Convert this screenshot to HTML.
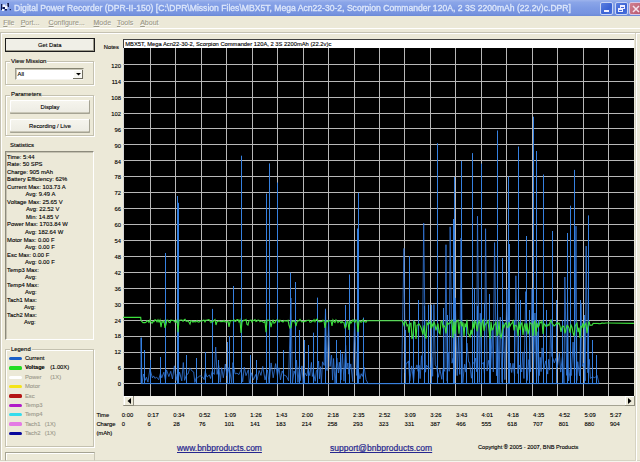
<!DOCTYPE html><html><head><meta charset="utf-8"><style>
*{margin:0;padding:0;box-sizing:border-box}
html,body{width:640px;height:462px;overflow:hidden;background:#ece9d8;font-family:'Liberation Sans', sans-serif;color:#000}
.ab{position:absolute}
.t{position:absolute;white-space:nowrap;font-size:5.85px;line-height:7px;-webkit-text-stroke:0.12px currentColor}
.grp{position:absolute;border:1px solid #c4c1b0;box-shadow:inset 1px 1px 0 #fff, 1px 1px 0 #fff}
.lbl{position:absolute;background:#ece9d8;white-space:nowrap;font-size:5.9px;line-height:7px;padding:0 1px;-webkit-text-stroke:0.12px currentColor}
.btn{position:absolute;background:linear-gradient(#f6f5ee,#ecebe2);border-radius:1px;box-shadow:inset -1px -1px 0 #a5a393, inset 0 -2px 0 #c9c7b8, inset 1px 1px 0 #fff;font-size:5.8px;line-height:7px;text-align:center;white-space:nowrap;-webkit-text-stroke:0.12px currentColor}
</style></head><body>

<div class="ab" style="left:0;top:0;width:640px;height:16px;background:linear-gradient(#9db3ec 0%,#8aa5e8 15%,#7d9ae4 50%,#7693e0 85%,#6b89d6 100%)"></div>
<svg class="ab" style="left:0;top:0" width="14" height="16" viewBox="0 0 14 16"><g fill="#101a50"><rect x="1" y="4" width="1.5" height="6"/><rect x="7" y="3" width="2" height="4"/><rect x="3" y="7" width="2" height="2"/><rect x="9.7" y="9" width="1.2" height="1.2"/><rect x="5" y="9" width="2" height="1.5"/></g><g fill="#f0f4ff"><rect x="2.5" y="4.5" width="3" height="2.5"/><rect x="5" y="6" width="2.5" height="3"/><rect x="2" y="9" width="2" height="2"/><rect x="6.5" y="3.5" width="0.8" height="3"/></g></svg>
<div class="ab" style="left:14px;top:3px;font-size:9.2px;line-height:10px;color:#dce6fa;-webkit-text-stroke:0.35px #dce6fa;white-space:nowrap;transform-origin:0 0;transform:scaleX(0.9354)">Digital Power Recorder (DPR-II-150) [C:\DPR\Mission Files\MBX5T, Mega Acn22-30-2, Scorpion Commander 120A, 2 3S 2200mAh (22.2v)c.DPR]</div>
<div class="ab" style="left:600px;top:2px;width:13px;height:13px;border:1px solid #c8d4f4;border-radius:2px;background:linear-gradient(135deg,#5b7fe0,#3a62d4 60%,#4a70dc)"><div class="ab" style="left:2.5px;top:7px;width:5px;height:2px;background:#eef"></div></div>
<div class="ab" style="left:614.5px;top:2px;width:13px;height:13px;border:1px solid #c8d4f4;border-radius:2px;background:linear-gradient(135deg,#5b7fe0,#3a62d4 60%,#4a70dc)"><div class="ab" style="left:4.5px;top:2px;width:5px;height:4px;border:1px solid #eef;border-top-width:2px"></div><div class="ab" style="left:2.5px;top:4.5px;width:5px;height:4px;border:1px solid #eef;border-top-width:2px;background:#4468d6"></div></div>
<div class="ab" style="left:629px;top:2px;width:13px;height:13px;border:1px solid #d8c8e8;border-radius:2px;background:linear-gradient(135deg,#d08090,#b85870)"><svg class="ab" style="left:2px;top:2px" width="8" height="8"><path d="M1 1L7 7M7 1L1 7" stroke="#f4e0ec" stroke-width="1.5"/></svg></div>
<div class="ab" style="left:0;top:16px;width:640px;height:12px;background:#ece9d8"></div>
<div class="ab" style="left:0;top:28px;width:640px;height:1px;background:#fff"></div>
<div class="ab" style="left:0;top:32px;width:640px;height:1px;background:#c5c2b2"></div>
<div class="ab" style="left:0;top:33px;width:640px;height:1px;background:#fff"></div>
<div class="t" style="left:3.2px;top:19px;font-size:7px;line-height:8px;color:#9d9a89;text-shadow:0.6px 0.6px 0 #fff"><u>F</u>ile</div>
<div class="t" style="left:20.7px;top:19px;font-size:7px;line-height:8px;color:#9d9a89;text-shadow:0.6px 0.6px 0 #fff"><u>P</u>ort...</div>
<div class="t" style="left:48.6px;top:19px;font-size:7px;line-height:8px;color:#9d9a89;text-shadow:0.6px 0.6px 0 #fff"><u>C</u>onfigure...</div>
<div class="t" style="left:93.5px;top:19px;font-size:7px;line-height:8px;color:#9d9a89;text-shadow:0.6px 0.6px 0 #fff"><u>M</u>ode</div>
<div class="t" style="left:116.9px;top:19px;font-size:7px;line-height:8px;color:#9d9a89;text-shadow:0.6px 0.6px 0 #fff"><u>T</u>ools</div>
<div class="t" style="left:140.2px;top:19px;font-size:7px;line-height:8px;color:#9d9a89;text-shadow:0.6px 0.6px 0 #fff"><u>A</u>bout</div>
<div class="ab" style="left:0;top:32px;width:1px;height:430px;background:#c5c2b2"></div>
<div class="ab" style="left:1px;top:33px;width:1px;height:428px;background:#fff"></div>
<div class="ab" style="left:0;top:460px;width:640px;height:1px;background:#d6d3c3"></div>
<div class="ab" style="left:0;top:461px;width:640px;height:1px;background:#f6f5ee"></div>
<div class="ab" style="left:635px;top:33px;width:1px;height:428px;background:#d6d3c3"></div>
<div class="ab" style="left:636px;top:33px;width:1px;height:428px;background:#fff"></div>
<div class="ab" style="left:5px;top:38px;width:90px;height:14px;border:1px solid #1c1c1c;background:#f0efe7;box-shadow:inset -1px -1px 0 #9d9b8c"></div>
<div class="t" style="left:38px;top:41.9px">Get Data</div>
<div class="grp" style="left:5px;top:61px;width:89px;height:24px"></div>
<div class="lbl" style="left:10px;top:57px;font-size:6.1px">View Mission</div>
<div class="ab" style="left:15px;top:68px;width:69px;height:12px;background:#fff;border:1px solid;border-color:#858371 #e8e6da #f4f3ee #a09e90;box-shadow:inset 1px 1px 0 #c9c7b8"></div>
<div class="t" style="left:17.5px;top:70.9px">All</div>
<div class="ab" style="left:73px;top:70px;width:10px;height:9px;background:#f8f8f4;box-shadow:inset -1px -1px 0 #6f6d60, inset 1px 1px 0 #fff"><svg class="ab" style="left:2.5px;top:3px" width="5" height="3"><path d="M0 0H5L2.5 2.6Z" fill="#000"/></svg></div>
<div class="grp" style="left:5px;top:94.5px;width:89px;height:41px"></div>
<div class="lbl" style="left:10px;top:90.8px">Parameters</div>
<div class="btn" style="left:10px;top:100px;width:80px;height:14px;padding-top:3.5px">Display</div>
<div class="btn" style="left:10px;top:119px;width:80px;height:14px;padding-top:3.5px">Recording / Live</div>
<div class="t" style="left:10px;top:142px;font-size:6px">Statistics</div>
<div class="ab" style="left:5px;top:151px;width:89px;height:189px;border:1px solid;border-color:#8c8a7c #fff #fff #8c8a7c;box-shadow:inset 1px 1px 0 #c5c2b2"></div>
<div class="t" style="left:7.1px;top:153.80px">Time: 5:44</div>
<div class="t" style="left:7.1px;top:161.32px">Rate: 50 SPS</div>
<div class="t" style="left:7.1px;top:168.84px">Charge: 905 mAh</div>
<div class="t" style="left:7.1px;top:176.36px">Battery Efficiency: 62%</div>
<div class="t" style="left:7.1px;top:183.88px">Current Max: 103.73 A</div>
<div class="t" style="left:25.5px;top:191.40px">Avg: 9.49 A</div>
<div class="t" style="left:7.1px;top:198.92px">Voltage Max: 25.65 V</div>
<div class="t" style="left:26px;top:206.44px">Avg: 22.52 V</div>
<div class="t" style="left:26px;top:213.96px">Min: 14.85 V</div>
<div class="t" style="left:7.1px;top:221.48px">Power Max: 1703.84 W</div>
<div class="t" style="left:25px;top:229.00px">Avg: 182.64 W</div>
<div class="t" style="left:7.1px;top:236.52px">Motor Max: 0.00 F</div>
<div class="t" style="left:25px;top:244.04px">Avg: 0.00 F</div>
<div class="t" style="left:7.1px;top:251.56px">Esc Max: 0.00 F</div>
<div class="t" style="left:25px;top:259.08px">Avg: 0.00 F</div>
<div class="t" style="left:7.1px;top:266.60px">Temp3 Max:</div>
<div class="t" style="left:25px;top:274.12px">Avg:</div>
<div class="t" style="left:7.1px;top:281.64px">Temp4 Max:</div>
<div class="t" style="left:25px;top:289.16px">Avg:</div>
<div class="t" style="left:7.1px;top:296.68px">Tach1 Max:</div>
<div class="t" style="left:24px;top:304.20px">Avg:</div>
<div class="t" style="left:7.1px;top:311.72px">Tach2 Max:</div>
<div class="t" style="left:24px;top:319.24px">Avg:</div>
<div class="grp" style="left:5px;top:349px;width:89px;height:98px"></div>
<div class="lbl" style="left:10px;top:345.5px">Legend</div>
<div class="ab" style="left:9px;top:357.00px;width:13px;height:3.2px;background:#1a5fc8;border-radius:1.5px"></div>
<div class="t" style="left:24.9px;top:355.10px;color:#000;font-weight:normal;font-size:5.85px">Current</div>
<div class="ab" style="left:9px;top:366.35px;width:13px;height:3.2px;background:#22dd22;border-radius:1.5px"></div>
<div class="t" style="left:24.9px;top:364.45px;color:#000;font-weight:bold;font-size:5.6px">Voltage</div>
<div class="t" style="left:50.2px;top:364.45px;color:#000;font-size:5.76px">(1.00X)</div>
<div class="ab" style="left:9px;top:375.70px;width:13px;height:3.2px;background:#ffffff;border-radius:1.5px"></div>
<div class="t" style="left:24.9px;top:373.80px;color:#9c9a8c;font-weight:normal;font-size:5.85px">Power</div>
<div class="t" style="left:50.2px;top:373.80px;color:#9c9a8c;font-size:5.76px">(1X)</div>
<div class="ab" style="left:9px;top:385.05px;width:13px;height:3.2px;background:#f4e418;border-radius:1.5px"></div>
<div class="t" style="left:24.9px;top:383.15px;color:#9c9a8c;font-weight:normal;font-size:5.85px">Motor</div>
<div class="ab" style="left:9px;top:394.40px;width:13px;height:3.2px;background:#b41414;border-radius:1.5px"></div>
<div class="t" style="left:24.9px;top:392.50px;color:#9c9a8c;font-weight:normal;font-size:5.85px">Esc</div>
<div class="ab" style="left:9px;top:403.75px;width:13px;height:3.2px;background:#b01cc8;border-radius:1.5px"></div>
<div class="t" style="left:24.9px;top:401.85px;color:#9c9a8c;font-weight:normal;font-size:5.85px">Temp3</div>
<div class="ab" style="left:9px;top:413.10px;width:13px;height:3.2px;background:#34dcec;border-radius:1.5px"></div>
<div class="t" style="left:24.9px;top:411.20px;color:#9c9a8c;font-weight:normal;font-size:5.85px">Temp4</div>
<div class="ab" style="left:9px;top:422.45px;width:13px;height:3.2px;background:#e47ae4;border-radius:1.5px"></div>
<div class="t" style="left:24.9px;top:420.55px;color:#9c9a8c;font-weight:normal;font-size:5.85px">Tach1</div>
<div class="t" style="left:44.8px;top:420.55px;color:#9c9a8c;font-size:5.76px">(1X)</div>
<div class="ab" style="left:9px;top:431.80px;width:13px;height:3.2px;background:#08089c;border-radius:1.5px"></div>
<div class="t" style="left:24.9px;top:429.90px;color:#9c9a8c;font-weight:normal;font-size:5.85px">Tach2</div>
<div class="t" style="left:44.8px;top:429.90px;color:#9c9a8c;font-size:5.76px">(1X)</div>
<div class="ab" style="left:5px;top:452px;width:90px;height:9px;border:1px solid;border-color:#a5a393 #c8c6b6 transparent #a5a393;box-shadow:inset 1px 1px 0 #fff"></div>
<div class="t" style="left:103.8px;top:43.5px;font-size:5.75px">Notes</div>
<div class="ab" style="left:123px;top:39px;width:511px;height:9px;background:#fff;border-top:1px solid #404040;border-left:1px solid #404040"></div>
<div class="t" style="left:125.3px;top:40.5px;font-size:5.79px">MBX5T, Mega Acn22-30-2, Scorpion Commander 120A, 2 3S 2200mAh (22.2v)c</div>
<svg class="ab" style="left:123px;top:48px" width="511" height="348" viewBox="123 48 511 348"><rect x="123" y="48" width="511" height="348" fill="#000"/><line x1="123.5" y1="48" x2="123.5" y2="396" stroke="#d8d8d8" stroke-width="1"/><path d="M123 64.5H634 M123 81.5H634 M123 97.5H634 M123 113.5H634 M123 128.5H634 M123 144.5H634 M123 160.5H634 M123 176.5H634 M123 192.5H634 M123 208.5H634 M123 224.5H634 M123 240.5H634 M123 256.5H634 M123 272.5H634 M123 288.5H634 M123 303.5H634 M123 320.5H634 M123 336.5H634 M123 352.5H634 M123 368.5H634 M123 383.5H634 M150.5 48V396 M175.5 48V396 M201.5 48V396 M226.5 48V396 M252.5 48V396 M277.5 48V396 M303.5 48V396 M328.5 48V396 M354.5 48V396 M379.5 48V396 M404.5 48V396 M430.5 48V396 M455.5 48V396 M481.5 48V396 M506.5 48V396 M532.5 48V396 M557.5 48V396 M583.5 48V396 M608.5 48V396" stroke="#b8b8b8" stroke-width="1" fill="none"/><path d="M141.00 383.6 L141.00 337.7 L142.00 383.6 L143.49 374.0 L145.29 380.3 L146.35 377.2 L147.98 382.1 L149.92 368.7 L152.39 377.9 L153.60 375.9 L154.88 378.3 L156.70 377.2 L158.72 379.7 L160.40 373.2 L161.76 377.8 L163.86 372.2 L165.49 380.4 L166.54 369.9 L168.86 376.6 L170.73 371.3 L172.44 379.0 L174.41 365.8 L175.99 380.6 L177.24 374.0 L178.43 377.8 L179.55 372.1 L181.78 380.9 L183.32 362.5 L184.59 380.4 L186.47 374.7 L188.02 374.0 L189.80 367.9 L192.15 371.1 L193.73 372.0 L194.83 382.5 L196.34 377.3 L197.49 377.8 L199.41 376.2 L200.96 375.9 L202.66 377.1 L204.17 379.6 L205.21 371.4 L207.02 377.1 L209.31 374.9 L210.57 378.5 L212.06 371.5 L214.34 374.4 L215.68 347.1 L217.10 374.4 L218.77 365.6 L220.32 382.3 L221.62 367.7 L223.34 377.8 L225.33 364.0 L227.05 375.8 L229.25 367.1 L231.67 382.8 L232.90 362.6 L235.14 373.9 L236.96 373.2 L238.93 374.6 L241.24 369.3 L242.68 381.9 L244.31 367.2 L246.00 375.6 L248.37 369.7 L249.40 383.6 L251.60 372.8 L253.44 379.9 L255.61 374.5 L257.03 379.9 L259.17 370.5 L260.93 375.4 L262.73 366.3 L265.04 379.9 L267.46 370.0 L269.12 383.1 L271.12 362.9 L273.20 377.8 L275.65 363.6 L277.38 375.6 L279.03 367.8 L280.50 379.9 L282.17 370.9 L283.93 375.0 L286.39 376.1 L288.56 380.8 L290.93 298.0 L292.41 383.0 L294.04 370.9 L295.60 375.4 L296.48 360.1 L297.94 382.4 L299.37 366.3 L300.24 380.7 L301.95 365.9 L303.16 383.5 L304.84 372.9 L306.76 376.0 L308.16 368.5 L309.78 375.6 L311.43 362.4 L312.30 376.5 L313.40 372.3 L315.25 381.3 L316.40 370.5 L317.52 369.7 L318.61 361.0 L319.41 378.8 L320.45 366.7 L321.36 383.4 L322.52 361.8 L324.22 365.4 L325.49 308.8 L327.06 370.6 L328.62 319.8 L330.02 366.5 L331.52 355.1 L332.60 380.1 L333.52 358.5 L335.08 383.6 L336.83 358.0 L338.42 373.0 L339.31 362.2 L341.00 379.9 L342.38 353.8 L343.95 381.2 L345.64 345.3 L346.76 368.7 L347.91 363.0 L348.85 374.2 L350.78 363.9 L352.74 381.6 L354.67 319.8 L356.62 375.4 L358.48 371.1 L359.86 378.9 L361.21 373.7 L362.38 376.4 L364.19 367.4 L366.07 379.8 L368.07 383.6 L369.96 383.6 L371.50 383.6 L373.14 383.6 L374.55 383.6 L375.62 383.6 L376.78 383.6 L379.03 383.6 L380.46 383.6 L382.86 383.6 L384.23 383.6 L385.63 383.6 L387.40 383.6 L388.68 383.6 L390.24 383.6 L392.68 383.6 L395.00 383.6 L397.22 383.6 L399.17 383.6 L401.54 383.6 L403.95 248.4 L405.29 372.8 L406.15 363.2 L407.36 363.0 L408.47 360.9 L409.75 381.0 L411.64 365.9 L413.63 381.2 L414.54 369.7 L415.65 368.9 L416.95 364.9 L418.15 371.4 L419.10 365.4 L420.16 378.6 L421.50 355.7 L422.32 369.8 L423.69 223.1 L425.48 372.2 L426.41 365.2 L428.34 367.6 L429.69 368.1 L430.77 369.2 L431.72 357.5 L432.66 376.3 L433.92 304.4 L435.28 364.8 L436.65 367.3 L438.29 377.3 L439.90 369.3 L441.81 379.3 L443.12 368.0 L444.80 371.4 L445.98 244.7 L447.13 381.2 L448.20 352.1 L449.18 371.3 L450.15 226.8 L452.01 363.2 L453.20 358.1 L454.04 378.9 L455.24 297.9 L457.18 375.6 L458.41 337.2 L459.78 374.4 L461.02 238.1 L462.74 382.8 L464.64 364.2 L465.85 372.1 L466.96 343.1 L468.67 362.2 L469.50 362.2 L471.44 378.2 L472.84 362.8 L474.52 363.0 L475.71 358.1 L476.61 371.7 L477.49 216.2 L479.35 382.5 L480.26 313.2 L481.56 364.4 L483.38 362.3 L484.53 374.3 L485.57 228.7 L487.07 371.1 L488.47 360.4 L490.46 373.3 L492.27 328.1 L493.30 371.9 L494.55 242.5 L496.48 375.8 L497.54 310.5 L499.06 383.5 L500.25 317.2 L502.01 382.3 L503.28 322.3 L504.92 379.7 L506.86 289.5 L508.70 381.1 L510.37 363.1 L511.68 372.5 L513.03 363.3 L514.60 375.8 L515.85 275.8 L517.76 373.5 L519.72 365.0 L521.69 371.9 L522.95 351.9 L523.95 378.5 L525.76 291.6 L527.18 380.5 L528.85 359.6 L530.56 371.7 L532.08 289.0 L533.58 367.4 L534.91 313.0 L536.62 381.3 L537.99 331.7 L539.32 375.6 L540.22 357.3 L541.09 371.6 L542.05 347.9 L543.83 369.2 L545.77 360.9 L547.69 374.1 L548.68 359.3 L549.65 370.1 L550.77 319.9 L551.76 356.0 L552.77 358.1 L554.33 362.9 L555.83 358.3 L557.38 367.3 L559.37 353.3 L560.70 372.1 L562.48 355.8 L563.99 383.6 L564.83 277.0 L566.70 375.4 L567.53 297.2 L568.60 381.0 L570.15 370.0 L571.24 375.6 L573.08 342.1 L574.66 375.5 L575.99 226.1 L576.84 380.6 L577.71 361.7 L579.64 375.9 L581.05 303.4 L582.21 366.4 L583.87 363.2 L585.23 380.8 L586.15 246.1 L587.79 372.7 L589.25 359.3 L590.37 378.4 L592.69 376.8 L594.81 377.8 L597.13 375.4 L599.00 383.6" stroke="#3478dc" stroke-width="0.8" fill="none" stroke-linejoin="bevel"/><path d="M165.5 383.6 V253 M177.5 383.6 V196 M178.5 383.6 V202.8 M233.5 383.6 V286 M241.5 383.6 V155.7 M266.5 383.6 V193.6 M269.5 383.6 V163.4 M277.5 383.6 V182.5 M290.5 383.6 V272.7 M295.5 383.6 V282 M349.5 383.6 V274.5 M357.5 383.6 V228.5 M358.5 383.6 V192.8 M409.5 383.6 V256 M437.5 383.6 V143.2 M454.5 383.6 V177 M453.5 383.6 V219 M461.5 383.6 V160.9 M472.5 383.6 V153.1 M472.5 383.6 V242.7 M481.5 383.6 V163.6 M497.5 383.6 V130.5 M502.5 383.6 V258 M508.5 383.6 V176.5 M518.5 383.6 V146.5 M526.5 383.6 V236 M533.5 383.6 V116.7 M536.5 383.6 V151 M543.5 383.6 V174.5 M552.5 383.6 V231 M567.5 383.6 V233 M570.5 383.6 V205.7 M574.5 383.6 V169.9 M588.5 383.6 V215.4 M141.5 383.6 V337.7 M144.5 383.6 V350 M212.5 383.6 V308.9 M227.5 383.6 V342 M229.5 383.6 V336 M304.5 383.6 V340 M313.5 383.6 V332.7 M317.5 383.6 V297.6 M325.5 383.6 V310 M345.5 383.6 V305 M363.5 383.6 V317.6 M424.5 383.6 V305.8 M428.5 383.6 V304.7 M431.5 383.6 V304.7 M443.5 383.6 V308 M474.5 383.6 V288.5 M477.5 383.6 V305.8 M484.5 383.6 V303.6 M489.5 383.6 V294 M509.5 383.6 V244 M520.5 383.6 V300 M514.5 383.6 V320 M546.5 383.6 V310 M556.5 383.6 V300 M562.5 383.6 V320 M580.5 383.6 V300 M584.5 383.6 V315 M592.5 383.6 V340 M596.5 383.6 V355 M405.5 383.6 V330 M413.5 383.6 V320 M418.5 383.6 V300 M447.5 383.6 V315 M466.5 383.6 V320 M490.5 383.6 V330 M529.5 383.6 V310 M538.5 383.6 V320 M576.5 383.6 V330 M336.5 383.6 V340 M340.5 383.6 V350 M299.5 383.6 V330 M308.5 383.6 V345 M150.5 383.6 V360 M160.5 383.6 V357 M186.5 383.6 V355 M196.5 383.6 V358 M205.5 383.6 V352 M218.5 383.6 V360 M250.5 383.6 V355 M256.5 383.6 V360 M283.5 383.6 V350 M141 383.6 H599" stroke="#3580e0" stroke-width="1" fill="none"/><path d="M123.0 317.4 L140.7 317.4 L141.0 320.5 L142.0 321.6 L143.0 322.7 L144.0 322.6 L145.0 322.6 L146.0 322.2 L147.0 320.7 L148.0 321.3 L149.0 322.4 L150.0 319.9 L151.0 322.0 L152.0 323.2 L153.0 321.4 L154.0 321.7 L155.0 319.8 L156.0 320.2 L157.0 321.8 L158.0 319.8 L159.0 322.0 L160.0 320.0 L161.0 327.2 L162.0 321.5 L163.0 322.2 L164.0 320.7 L165.0 327.8 L166.0 324.3 L167.0 320.1 L168.0 320.3 L169.0 322.3 L170.0 322.5 L171.0 320.0 L172.0 320.5 L173.0 320.4 L174.0 320.9 L175.0 322.1 L176.0 322.4 L177.0 319.8 L178.0 332.2 L179.0 320.3 L180.0 320.3 L181.0 320.0 L182.0 320.0 L183.0 321.3 L184.0 319.9 L185.0 319.3 L186.0 321.1 L187.0 321.4 L188.0 320.8 L189.0 322.2 L190.0 324.0 L191.0 320.7 L192.0 320.9 L193.0 322.2 L194.0 321.2 L195.0 321.9 L196.0 321.7 L197.0 320.7 L198.0 322.0 L199.0 322.1 L200.0 321.1 L201.0 321.3 L202.0 321.0 L203.0 320.2 L204.0 320.1 L205.0 321.8 L206.0 320.1 L207.0 320.2 L208.0 319.7 L209.0 319.6 L210.0 321.3 L211.0 322.6 L212.0 321.1 L213.0 321.8 L214.0 320.3 L215.0 319.5 L216.0 325.0 L217.0 321.7 L218.0 321.2 L219.0 320.9 L220.0 321.3 L221.0 321.9 L222.0 321.0 L223.0 321.8 L224.0 320.4 L225.0 322.0 L226.0 321.9 L227.0 321.9 L228.0 321.1 L229.0 326.8 L230.0 321.8 L231.0 320.4 L232.0 320.7 L233.0 320.6 L234.0 319.9 L235.0 321.6 L236.0 321.1 L237.0 319.6 L238.0 319.5 L239.0 322.0 L240.0 320.0 L241.0 333.0 L242.0 322.0 L243.0 321.0 L244.0 320.1 L245.0 320.4 L246.0 319.6 L247.0 324.4 L248.0 325.1 L249.0 320.6 L250.0 320.4 L251.0 319.9 L252.0 322.1 L253.0 320.4 L254.0 320.5 L255.0 319.7 L256.0 321.6 L257.0 321.1 L258.0 320.1 L259.0 320.3 L260.0 321.8 L261.0 321.1 L262.0 321.2 L263.0 322.1 L264.0 322.5 L265.0 321.0 L266.0 332.2 L267.0 320.2 L268.0 320.1 L269.0 320.5 L270.0 320.4 L271.0 327.1 L272.0 322.6 L273.0 320.3 L274.0 323.1 L275.0 322.5 L276.0 320.7 L277.0 319.8 L278.0 320.1 L279.0 322.0 L280.0 320.2 L281.0 321.1 L282.0 321.6 L283.0 322.1 L284.0 320.4 L285.0 320.9 L286.0 320.8 L287.0 321.1 L288.0 320.2 L289.0 325.3 L290.0 328.1 L291.0 327.2 L292.0 321.1 L293.0 321.6 L294.0 320.8 L295.0 322.4 L296.0 326.0 L297.0 321.8 L298.0 320.7 L299.0 320.9 L300.0 319.5 L301.0 320.9 L302.0 322.1 L303.0 321.3 L304.0 321.9 L305.0 321.1 L306.0 321.2 L307.0 320.4 L308.0 320.5 L309.0 320.1 L310.0 322.3 L311.0 322.3 L312.0 320.8 L313.0 321.2 L314.0 319.6 L315.0 321.8 L316.0 319.8 L317.0 319.1 L318.0 320.8 L319.0 321.9 L320.0 321.6 L321.0 321.6 L322.0 321.5 L323.0 320.2 L324.0 320.6 L325.0 327.8 L326.0 321.9 L327.0 320.9 L328.0 321.9 L329.0 320.5 L330.0 320.6 L331.0 320.7 L332.0 325.8 L333.0 319.9 L334.0 321.7 L335.0 322.5 L336.0 319.9 L337.0 321.0 L338.0 322.5 L339.0 321.2 L340.0 321.5 L341.0 323.0 L342.0 321.3 L343.0 322.6 L344.0 322.7 L345.0 327.8 L346.0 326.9 L347.0 321.3 L348.0 321.8 L349.0 330.0 L350.0 320.4 L351.0 323.1 L352.0 321.6 L353.0 319.8 L354.0 321.4 L355.0 322.3 L356.0 320.0 L357.0 320.9 L358.0 331.9 L359.0 321.1 L360.0 320.7 L361.0 322.3 L362.0 321.6 L363.0 319.8 L364.0 321.7 L365.0 321.5 L366.0 322.2 L367.0 320.8 L368.0 320.6 L369.0 320.7 L370.0 320.7 L371.0 320.7 L372.0 320.7 L373.0 320.7 L374.0 320.7 L375.0 320.7 L376.0 320.7 L377.0 320.7 L378.0 320.7 L379.0 320.7 L380.0 320.7 L381.0 320.7 L382.0 320.7 L383.0 320.7 L384.0 320.7 L385.0 320.7 L386.0 320.7 L387.0 320.7 L388.0 320.7 L389.0 320.7 L390.0 320.7 L391.0 320.7 L392.0 320.7 L393.0 320.7 L394.0 320.7 L395.0 320.7 L396.0 320.7 L397.0 320.7 L398.0 320.7 L399.0 320.7 L400.0 320.7 L401.0 320.7 L402.0 320.7 L403.0 322.4 L404.0 325.4 L405.0 321.8 L406.0 321.6 L407.0 325.8 L408.0 324.7 L409.0 332.6 L410.0 323.4 L411.0 323.2 L412.0 339.0 L413.0 335.3 L414.0 321.3 L415.0 322.2 L416.0 338.9 L417.0 325.3 L418.0 324.8 L419.0 323.8 L420.0 325.6 L421.0 327.5 L422.0 330.8 L423.0 334.6 L424.0 325.4 L425.0 335.0 L426.0 338.6 L427.0 322.5 L428.0 324.5 L429.0 323.5 L430.0 321.7 L431.0 328.4 L432.0 323.8 L433.0 326.5 L434.0 321.9 L435.0 324.7 L436.0 330.4 L437.0 326.6 L438.0 323.5 L439.0 332.2 L440.0 333.8 L441.0 321.5 L442.0 321.0 L443.0 327.2 L444.0 325.5 L445.0 327.2 L446.0 333.5 L447.0 322.5 L448.0 324.4 L449.0 323.1 L450.0 323.6 L451.0 321.6 L452.0 320.4 L453.0 337.7 L454.0 321.6 L455.0 333.9 L456.0 322.3 L457.0 321.0 L458.0 320.3 L459.0 333.8 L460.0 322.6 L461.0 321.7 L462.0 326.5 L463.0 322.2 L464.0 336.3 L465.0 323.3 L466.0 327.2 L467.0 319.8 L468.0 333.4 L469.0 334.7 L470.0 336.7 L471.0 329.8 L472.0 334.6 L473.0 321.4 L474.0 328.8 L475.0 321.4 L476.0 322.6 L477.0 331.3 L478.0 325.4 L479.0 321.3 L480.0 323.0 L481.0 337.3 L482.0 322.6 L483.0 320.4 L484.0 330.8 L485.0 325.6 L486.0 323.3 L487.0 323.0 L488.0 320.9 L489.0 330.2 L490.0 338.7 L491.0 321.7 L492.0 330.0 L493.0 329.2 L494.0 325.1 L495.0 324.5 L496.0 321.6 L497.0 336.0 L498.0 333.1 L499.0 321.3 L500.0 334.7 L501.0 337.3 L502.0 333.2 L503.0 325.2 L504.0 327.2 L505.0 323.9 L506.0 322.9 L507.0 326.8 L508.0 327.5 L509.0 322.2 L510.0 326.2 L511.0 324.2 L512.0 323.2 L513.0 321.0 L514.0 330.4 L515.0 325.5 L516.0 325.3 L517.0 326.9 L518.0 336.0 L519.0 321.9 L520.0 329.9 L521.0 324.2 L522.0 322.7 L523.0 334.9 L524.0 327.1 L525.0 323.4 L526.0 331.4 L527.0 323.4 L528.0 334.5 L529.0 330.2 L530.0 322.6 L531.0 323.3 L532.0 324.5 L533.0 336.0 L534.0 322.9 L535.0 320.6 L536.0 335.8 L537.0 323.0 L538.0 326.9 L539.0 325.9 L540.0 321.8 L541.0 322.9 L542.0 321.2 L543.0 334.0 L544.0 323.7 L545.0 324.6 L546.0 326.3 L547.0 326.2 L548.0 324.5 L549.0 325.5 L550.0 322.1 L551.0 320.2 L552.0 323.4 L553.0 324.3 L554.0 325.9 L555.0 325.3 L556.0 324.1 L557.0 322.7 L558.0 324.0 L559.0 322.8 L560.0 325.9 L561.0 332.0 L562.0 327.0 L563.0 326.0 L564.0 326.8 L565.0 333.3 L566.0 329.5 L567.0 325.5 L568.0 326.2 L569.0 327.9 L570.0 332.9 L571.0 325.0 L572.0 327.2 L573.0 332.7 L574.0 336.0 L575.0 326.9 L576.0 324.5 L577.0 323.1 L578.0 332.2 L579.0 327.6 L580.0 337.9 L581.0 326.4 L582.0 327.2 L583.0 322.8 L584.0 327.7 L585.0 324.7 L586.0 323.3 L587.0 333.1 L588.0 326.0 L589.0 321.4 L590.0 325.4 L591.0 325.0 L592.0 325.4 L593.0 323.6 L594.0 323.4 L595.0 323.5 L596.0 323.2 L597.0 323.5 L598.0 323.4 L599.0 323.8 L600.0 323.6 L601.0 323.4 L602.0 323.1 L603.0 323.0 L604.0 323.5 L605.0 323.1 L606.0 323.0 L607.0 323.0 L634.0 323.4" stroke="#3ee03e" stroke-width="1.1" fill="none"/></svg>
<div class="t" style="left:90px;width:31px;text-align:right;top:63.20px">120</div>
<div class="t" style="left:90px;width:31px;text-align:right;top:79.09px">114</div>
<div class="t" style="left:90px;width:31px;text-align:right;top:94.99px">108</div>
<div class="t" style="left:90px;width:31px;text-align:right;top:110.89px">102</div>
<div class="t" style="left:90px;width:31px;text-align:right;top:126.78px">96</div>
<div class="t" style="left:90px;width:31px;text-align:right;top:142.68px">90</div>
<div class="t" style="left:90px;width:31px;text-align:right;top:158.57px">84</div>
<div class="t" style="left:90px;width:31px;text-align:right;top:174.47px">78</div>
<div class="t" style="left:90px;width:31px;text-align:right;top:190.36px">72</div>
<div class="t" style="left:90px;width:31px;text-align:right;top:206.25px">66</div>
<div class="t" style="left:90px;width:31px;text-align:right;top:222.15px">60</div>
<div class="t" style="left:90px;width:31px;text-align:right;top:238.05px">54</div>
<div class="t" style="left:90px;width:31px;text-align:right;top:253.94px">48</div>
<div class="t" style="left:90px;width:31px;text-align:right;top:269.83px">42</div>
<div class="t" style="left:90px;width:31px;text-align:right;top:285.73px">36</div>
<div class="t" style="left:90px;width:31px;text-align:right;top:301.62px">30</div>
<div class="t" style="left:90px;width:31px;text-align:right;top:317.52px">24</div>
<div class="t" style="left:90px;width:31px;text-align:right;top:333.41px">18</div>
<div class="t" style="left:90px;width:31px;text-align:right;top:349.31px">12</div>
<div class="t" style="left:90px;width:31px;text-align:right;top:365.20px">6</div>
<div class="t" style="left:90px;width:31px;text-align:right;top:381.10px">0</div>
<div class="ab" style="left:123px;top:396px;width:512px;height:10px;background:#f3f1e8;border-bottom:1px solid #a5a393"></div>
<div class="ab" style="left:124px;top:396px;width:10px;height:10px;background:#ece9d8;box-shadow:inset -1px -1px 0 #8c8a7c, inset 1px 1px 0 #fff"><svg class="ab" style="left:3px;top:2px" width="4" height="6"><path d="M4 0V6L0.5 3Z" fill="#000"/></svg></div>
<div class="ab" style="left:625px;top:396px;width:10px;height:10px;background:#ece9d8;box-shadow:inset -1px -1px 0 #8c8a7c, inset 1px 1px 0 #fff"><svg class="ab" style="left:3px;top:2px" width="4" height="6"><path d="M0 0V6L3.5 3Z" fill="#000"/></svg></div>
<div class="t" style="left:96.4px;top:411.6px">Time</div>
<div class="t" style="left:96.4px;top:420.8px">Charge</div>
<div class="t" style="left:96.4px;top:430px">(mAh)</div>
<div class="t" style="left:121.80px;top:411.6px">0:00</div>
<div class="t" style="left:121.80px;top:420.8px">0</div>
<div class="t" style="left:147.50px;top:411.6px">0:17</div>
<div class="t" style="left:147.50px;top:420.8px">6</div>
<div class="t" style="left:173.20px;top:411.6px">0:34</div>
<div class="t" style="left:173.20px;top:420.8px">28</div>
<div class="t" style="left:198.90px;top:411.6px">0:52</div>
<div class="t" style="left:198.90px;top:420.8px">76</div>
<div class="t" style="left:224.60px;top:411.6px">1:09</div>
<div class="t" style="left:224.60px;top:420.8px">101</div>
<div class="t" style="left:250.30px;top:411.6px">1:26</div>
<div class="t" style="left:250.30px;top:420.8px">141</div>
<div class="t" style="left:276.00px;top:411.6px">1:43</div>
<div class="t" style="left:276.00px;top:420.8px">183</div>
<div class="t" style="left:301.70px;top:411.6px">2:00</div>
<div class="t" style="left:301.70px;top:420.8px">214</div>
<div class="t" style="left:327.40px;top:411.6px">2:18</div>
<div class="t" style="left:327.40px;top:420.8px">258</div>
<div class="t" style="left:353.10px;top:411.6px">2:35</div>
<div class="t" style="left:353.10px;top:420.8px">293</div>
<div class="t" style="left:378.80px;top:411.6px">2:52</div>
<div class="t" style="left:378.80px;top:420.8px">323</div>
<div class="t" style="left:404.50px;top:411.6px">3:09</div>
<div class="t" style="left:404.50px;top:420.8px">331</div>
<div class="t" style="left:430.20px;top:411.6px">3:26</div>
<div class="t" style="left:430.20px;top:420.8px">387</div>
<div class="t" style="left:455.90px;top:411.6px">3:43</div>
<div class="t" style="left:455.90px;top:420.8px">466</div>
<div class="t" style="left:481.60px;top:411.6px">4:01</div>
<div class="t" style="left:481.60px;top:420.8px">555</div>
<div class="t" style="left:507.30px;top:411.6px">4:18</div>
<div class="t" style="left:507.30px;top:420.8px">618</div>
<div class="t" style="left:533.00px;top:411.6px">4:35</div>
<div class="t" style="left:533.00px;top:420.8px">707</div>
<div class="t" style="left:558.70px;top:411.6px">4:52</div>
<div class="t" style="left:558.70px;top:420.8px">801</div>
<div class="t" style="left:584.40px;top:411.6px">5:09</div>
<div class="t" style="left:584.40px;top:420.8px">880</div>
<div class="t" style="left:610.10px;top:411.6px">5:27</div>
<div class="t" style="left:610.10px;top:420.8px">904</div>
<div class="t" style="left:177px;top:443.4px;font-size:8.45px;line-height:10px;color:#26268f;text-decoration:underline;-webkit-text-stroke:0.2px #26268f">www.bnbproducts.com</div>
<div class="t" style="left:330px;top:443.4px;font-size:8.5px;line-height:10px;color:#26268f;text-decoration:underline;-webkit-text-stroke:0.2px #26268f">support@bnbproducts.com</div>
<div class="t" style="left:478px;top:443.8px;font-size:5.66px">Copyright ® 2005 - 2007, BNB Products</div>
</body></html>
